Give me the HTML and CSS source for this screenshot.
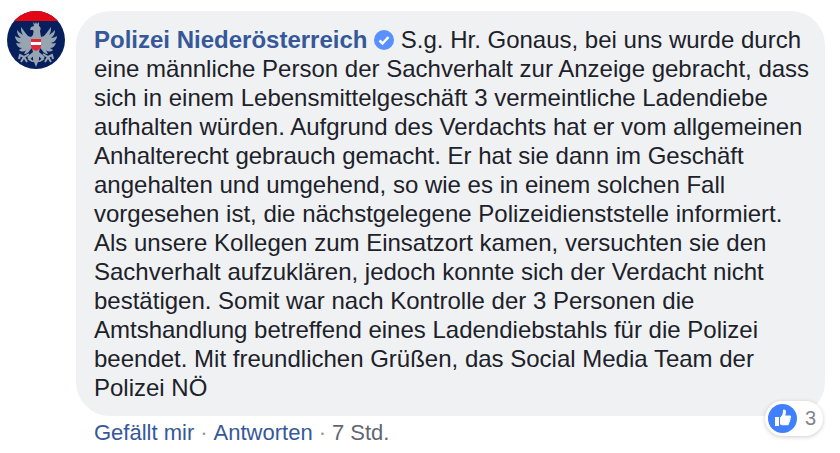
FILE: index.html
```html
<!DOCTYPE html>
<html lang="de">
<head>
  <meta charset="UTF-8">
  <meta name="viewport" content="width=device-width, initial-scale=1.0">
  <title>Kommentar</title>
  <link rel="stylesheet" href="styles.css">
</head>
<body>

  <div class="comment">
    <a class="avatar" href="#" aria-label="Polizei Niederösterreich">
      <svg viewBox="0 0 58 58">
        <defs>
          <clipPath id="round"><circle cx="29" cy="29" r="29"/></clipPath>
          <!-- Left half of the eagle, mirrored for the right -->
          <g id="half">
            <path fill="#97a5b3" d="M29 18l-2 1-1 5-2 2-3-1c-2-2-4-5-7-9 0 3 0 5 2 8-2-1-4-3-6-5 0 3 1 6 4 8-2 0-4-1-6-2 0 3 2 6 6 7-2 1-4 0-5 0 1 3 3 5 6 5l-3 2c2 2 5 2 7 0l-2 4c3 0 5-2 6-4l2-2 1 4-6 5 2 2 4-3 0 4 4-3z"/>
            <g fill="none" stroke="#97a5b3" stroke-width="2">
              <path d="M22 43l-5 3-4-2-1 4m5-2l-3 5m3-5l3 5"/>
              <path d="M26 44l-4 4 3 2"/>
            </g>
          </g>
        </defs>
        <g clip-path="url(#round)">
          <rect width="58" height="58" fill="#071f5c"/>
          <rect width="58" height="10" fill="#e30613"/>
          <use href="#half"/>
          <use href="#half" transform="translate(58 0) scale(-1 1)"/>
          <path fill="#97a5b3" d="M26 11l2 2 1-2 1 2 2-2v4c2 1 2 3 1 5l1 6-9 1 2-6-1-2-3 0 1-3 3-1z"/>
          <path fill="#97a5b3" d="M28 41h2l1 7 3 3-3 0-2 5-2-5-3 0 3-3z"/>
          <path fill="#e32636" d="M24 28h10v7c0 2-2 4-5 5-3-1-5-3-5-5z"/>
          <path fill="#fff" d="M24 31h10v3H24z"/>
        </g>
      </svg>
    </a>

    <div class="content">
      <div class="bubble">
        <p class="message">
          <a class="name" href="#">Polizei Niederösterreich</a>
          <svg class="verified" viewBox="0 0 20 20" role="img" aria-label="Verifiziert">
            <circle cx="10" cy="10" r="10" fill="#5890ff"/>
            <path d="M5.5 10.5l3 3 6-6.500" fill="none" stroke="#fff" stroke-width="2.500"/>
          </svg>
          S.g. Hr. Gonaus, bei uns wurde durch eine männliche Person der Sachverhalt zur Anzeige gebracht, dass sich in einem Lebensmittelgeschäft 3 vermeintliche Ladendiebe aufhalten würden. Aufgrund des Verdachts hat er vom allgemeinen Anhalterecht gebrauch gemacht. Er hat sie dann im Geschäft angehalten und umgehend, so wie es in einem solchen Fall vorgesehen ist, die nächstgelegene Polizeidienststelle informiert. Als unsere Kollegen zum Einsatzort kamen, versuchten sie den Sachverhalt aufzuklären, jedoch konnte sich der Verdacht nicht bestätigen. Somit war nach Kontrolle der 3 Personen die Amtshandlung betreffend eines Ladendiebstahls für die Polizei beendet. Mit freundlichen Grüßen, das Social Media Team der Polizei NÖ
        </p>

        <button class="reactions" type="button">
          <svg class="like" viewBox="0 0 29 29" aria-hidden="true">
            <circle cx="14.500" cy="14.500" r="14.500" fill="#4080ff"/>
            <path fill="#fff" d="M7 13h4v9H7zM12 13.500c2-1.500 3-3.500 3-7 0-1.500 3-1.500 3 1.500 0 1.500-.5 2.500-.8 3.500h4.300c2 0 2 2.300.8 2.700.8.800.5 1.900-.5 2.200.5.900.1 1.700-.7 2 .3 1-.3 2.800-1.500 2.800h-4.500c-1.300 0-2.300-.5-3.100-1z"/>
          </svg>
          <span>3</span>
        </button>
      </div>

      <div class="actions">
        <a href="#">Gefällt mir</a>
        <span class="dot">·</span>
        <a href="#">Antworten</a>
        <span class="dot">·</span>
        <span class="time">7 Std.</span>
      </div>
    </div>
  </div>

</body>
</html>
```

FILE: styles.css
```css
body {
  margin: 0;
  background: #fff;
  color: #1d2129;
  font-family: "Liberation Sans", Arial, sans-serif;
  font-size: 24px;
  line-height: 29px;
}

a {
  color: #365899;
  text-decoration: none;
}

a:hover {
  text-decoration: underline;
}

.comment {
  display: flex;
  align-items: flex-start;
  gap: 11px;
  padding: 11px 15px 0 7px;
}

.avatar {
  flex: none;
  width: 58px;
  height: 58px;
}

.avatar svg {
  display: block;
}

.content {
  flex: 1;
  min-width: 0;
}

.bubble {
  position: relative;
  padding: 14px 14px 14px 18px;
  background: #eff1f3;
  border-radius: 34px;
}

.message {
  margin: 0;
}

.name {
  font-weight: bold;
}

.verified {
  width: 20px;
  height: 20px;
  vertical-align: -2px;
}

/* Like counter hanging over the bottom right corner */
.reactions {
  position: absolute;
  right: 2px;
  bottom: -20px;
  display: flex;
  align-items: center;
  gap: 8px;
  padding: 3px 7px 3px 3px;
  border: none;
  border-radius: 18px;
  background: #fff;
  box-shadow: 0 1px 4px rgba(0, 0, 0, 0.2);
  color: #7f838b;
  font-family: inherit;
  font-size: 20px;
  cursor: pointer;
}

.like {
  width: 29px;
  height: 29px;
}

.actions {
  display: flex;
  gap: 6px;
  padding: 2px 18px 0;
  font-size: 22px;
}

.dot {
  color: #90949c;
}

.time {
  color: #616770;
}
```
